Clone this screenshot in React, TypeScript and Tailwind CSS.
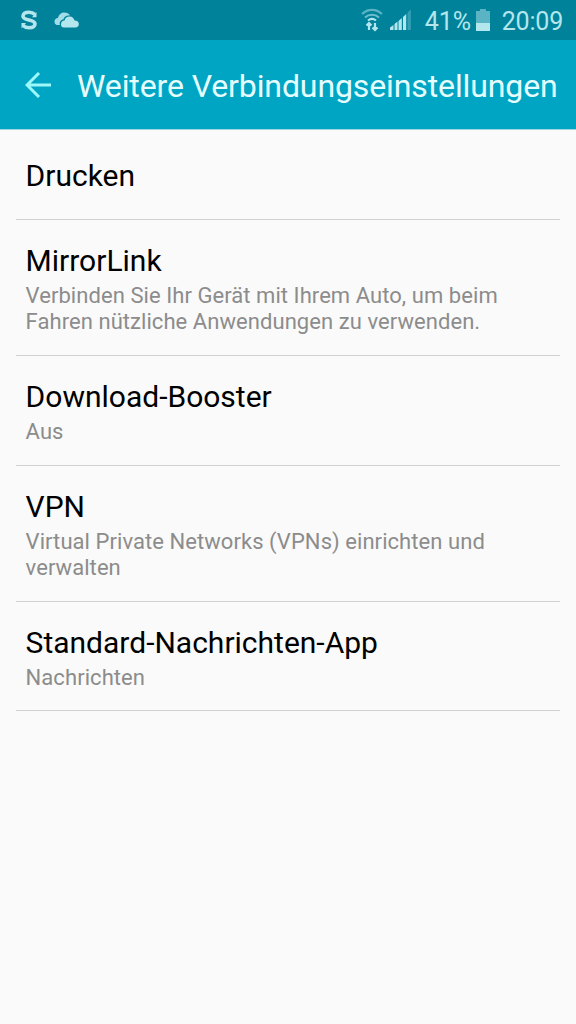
const items = [
    { title: "Drucken", lines: [], box: "h-[90px] pt-[27px]" },
    {
        title: "MirrorLink",
        lines: ["Verbinden Sie Ihr Gerät mit Ihrem Auto, um beim", "Fahren nützliche Anwendungen zu verwenden."],
        box: "h-[136px] pt-[22px]",
    },
    { title: "Download-Booster", lines: ["Aus"], box: "h-[110px] pt-[22px]" },
    {
        title: "VPN",
        lines: ["Virtual Private Networks (VPNs) einrichten und", "verwalten"],
        box: "h-[136px] pt-[22px]",
    },
    { title: "Standard-Nachrichten-App", lines: ["Nachrichten"], box: "h-[109px] pt-[22px]" },
]

const StatusBar = () => {
    return (
        <div className="h-10 bg-[#00829a] flex items-center justify-between text-[#b4e6ee]">
            <div className="flex items-center pl-5 gap-4">
                <svg width="18" height="22" viewBox="0 0 18 22" fill="none" stroke="currentColor" strokeWidth="3.600">
                    <path d="M15 5.500C13.500 4 11.500 3.200 9 3.200C5 3.200 3 4.800 3 7.200C3 11.800 15 10 15 14.800C15 17.500 12.500 18.800 9 18.800C6.500 18.800 4.500 18 3 16.500" />
                    <path d="M16.500 3V8.200H12ZM1.500 19.500V14H6Z" fill="currentColor" stroke="none" />
                </svg>
                <svg width="26" height="18" viewBox="0 0 26 18" fill="currentColor">
                    <path d="M6 14H4C1 14 0.500 12 0.500 10.500C0.500 8.500 2 7 4 7C4.500 4 7 1.500 10 1.500C13 1.500 15 2.500 16 4.500C12 4 10 6 9.500 8.200C7 8.700 5 11 6 14Z" opacity="0.9" />
                    <path d="M10 16.500C7.500 16.500 7 14.800 7 13.200C7 11 8.500 9.500 10.500 9.500C11 7 13 5.500 15.500 5.500C18.500 5.500 20 7.500 20.500 9.500C23.500 9.500 24.800 11 24.800 13C24.800 15 23.500 16.500 21.500 16.500Z" />
                </svg>
            </div>
            <div className="flex items-center pr-[13px]">
                <svg width="22" height="24" viewBox="0 0 22 24" fill="none" stroke="currentColor" strokeWidth="2.200">
                    <path d="M1 6C7 0.500 15 0.500 21 6" opacity="0.5" />
                    <path d="M4 9.500C8 5.800 14 5.800 18 9.500" opacity="0.6" />
                    <path d="M7 12.500C9.500 10.500 12.500 10.500 15 12.500" />
                    <path d="M8 22V15M5.500 17.500L8 15L10.500 17.500M14 15V22M11.500 19.500L14 22L16.500 19.500" />
                </svg>
                <svg className="ml-[7px]" width="21" height="22" viewBox="0 0 21 22" fill="currentColor">
                    <path d="M0 18.500L3.500 16V21H0ZM4.500 15L7.500 12.500V21H4.500ZM8.500 12L11.800 9V21H8.500ZM13 8L16.200 5V21H13Z" />
                    <path d="M17.500 3.500L20.800 0.500V21H17.500Z" opacity="0.3" />
                </svg>
                <span className="ml-[14px] w-[51px] pt-[3px] text-[25px] leading-[30px] tracking-[-0.1px]">41%</span>
                <svg width="14" height="22" viewBox="0 0 14 22" fill="currentColor">
                    <path d="M4 0H10V2H14V14H0V2H4Z" opacity="0.5" />
                    <path d="M0 14H14V22H0Z" />
                </svg>
                <span className="ml-[12px] pt-[3px] text-[25px] leading-[30px] tracking-[-0.2px]">20:09</span>
            </div>
        </div>
    )
}

export default function App() {
    return (
        <div className="w-[576px] h-[1024px] bg-[#fafafa] overflow-hidden font-['Roboto',sans-serif]">
            <StatusBar />
            <div className="h-[90px] bg-[#00a5c3] border-b border-[#9ed7e2] flex items-center text-[#e6feff] pl-[25px]">
                <svg className="text-[#9cf8fb]" width="27" height="26" viewBox="0 0 27 26" fill="none" stroke="currentColor" strokeWidth="3">
                    <path d="M26 13H2M14 1L2 13L14 25" />
                </svg>
                <h1 className="ml-[25px] pt-[2px] text-[32px] tracking-[-0.11px] whitespace-nowrap">Weitere Verbindungseinstellungen</h1>
            </div>
            <div className="px-4">
                {items.map((item) => (
                    <div key={item.title} className={`border-b border-[#d0d0d0] pl-[9.6px] ${item.box}`}>
                        <h2 className="text-[30px] leading-[38px] text-black">{item.title}</h2>
                        <div className="pt-[3px]">
                            {item.lines.map((line) => (
                                <p key={line} className="text-[22px] leading-[26px] tracking-[0.06px] text-[#8c8c8c] whitespace-nowrap">{line}</p>
                            ))}
                        </div>
                    </div>
                ))}
            </div>
        </div>
    )
}
